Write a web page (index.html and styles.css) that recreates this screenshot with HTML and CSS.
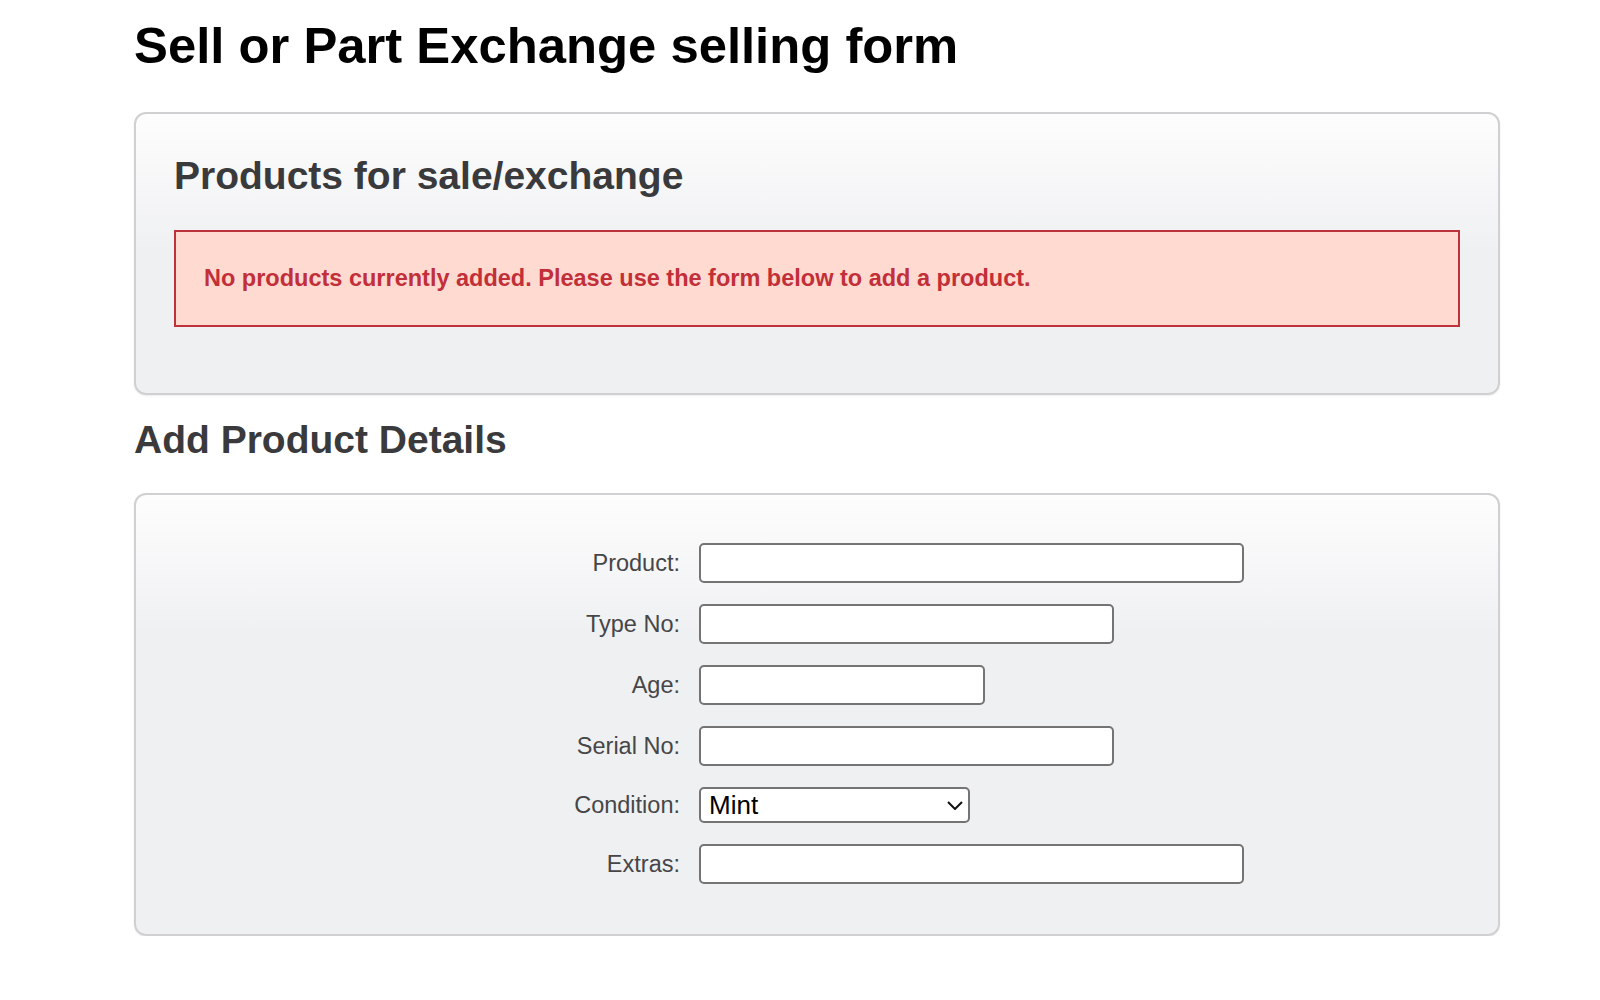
FILE: index.html
```html
<!DOCTYPE html>
<html>

<head>
    <meta name="viewport" content="width=device-width, initial-scale=1.0">
    <meta charset="utf-8" />
    <title>Sell or Part Exchange</title>
    <link rel="stylesheet" href="styles.css">
</head>

<body>
    <div class="page">
        <h1 class="page-title">Sell or Part Exchange selling form</h1>

        <div class="panel">
            <h2 class="panel-title">Products for sale/exchange</h2>
            <div class="alert">No products currently added. Please use the form below to add a product.</div>
        </div>

        <h2 class="section-title">Add Product Details</h2>

        <form class="panel product-form">
            <label for="product">Product:</label>
            <input id="product" class="field field-lg" type="text">

            <label for="typeno">Type No:</label>
            <input id="typeno" class="field field-md" type="text">

            <label for="age">Age:</label>
            <input id="age" class="field field-sm" type="text">

            <label for="serial">Serial No:</label>
            <input id="serial" class="field field-md" type="text">

            <label for="condition">Condition:</label>
            <span class="select-wrap">
                <select id="condition" class="select">
                    <option>Mint</option>
                    <option>Excellent</option>
                    <option>Good</option>
                    <option>Fair</option>
                    <option>Poor</option>
                </select>
                <svg class="chevron" width="16" height="9" viewBox="0 0 16 9">
                    <path d="M1 1 L8 8 L15 1" fill="none" stroke="#111" stroke-width="2" />
                </svg>
            </span>

            <label for="extras">Extras:</label>
            <input id="extras" class="field field-lg" type="text">
        </form>
    </div>
</body>

</html>
```

FILE: styles.css
```css
body {
    margin: 0;
    padding: 0;
    background: #fff;
    font-family: "Liberation Sans", Arial, Helvetica, sans-serif;
}

.page {
    width: 1366px;
    margin-left: 134px;
    padding-top: 17px;
}

.page-title {
    margin: 0 0 37px;
    font-size: 50.8px;
    line-height: 58px;
    font-weight: 700;
    color: #000;
}

.panel {
    border: 2px solid #d0d0d2;
    border-radius: 12px;
    background: linear-gradient(#fdfdfd, #eff0f2 140px);
    box-shadow: 0 1px 2px rgba(0, 0, 0, 0.08);
    padding: 39px 38px;
}

.panel-title,
.section-title {
    font-size: 39px;
    line-height: 45px;
    font-weight: 700;
    color: #3a3a3c;
}

.panel-title {
    margin: 0 0 32px;
}

.section-title {
    margin: 22px 0 31px;
}

.alert {
    border: 2px solid #bd333b;
    background: #ffdad1;
    color: #c22f38;
    font-size: 23.5px;
    line-height: 27px;
    font-weight: 700;
    padding: 33px 28px;
    margin-bottom: 27px;
}

.product-form {
    display: grid;
    grid-template-columns: 506px auto;
    column-gap: 19px;
    row-gap: 21px;
    align-items: center;
    justify-items: start;
    padding: 48px 38px 50px;
    margin: 0;
}

.product-form label {
    justify-self: end;
    font-size: 23.5px;
    color: #464648;
}

.field {
    box-sizing: border-box;
    height: 40px;
    border: 2px solid #747474;
    border-radius: 5px;
    background: #fff;
    padding: 0 8px;
    font-family: inherit;
    font-size: 24px;
    margin: 0;
}

.field-lg {
    width: 545px;
}

.field-md {
    width: 415px;
}

.field-sm {
    width: 286px;
}

.select-wrap {
    position: relative;
    display: block;
}

.select {
    -webkit-appearance: none;
    appearance: none;
    box-sizing: border-box;
    display: block;
    width: 271px;
    height: 36px;
    border: 2px solid #747474;
    border-radius: 5px;
    background: #fff;
    color: #000;
    padding: 0 30px 0 8px;
    font-family: inherit;
    font-size: 26px;
    margin: 0;
}

.chevron {
    position: absolute;
    right: 7px;
    top: 14px;
    pointer-events: none;
}
```
